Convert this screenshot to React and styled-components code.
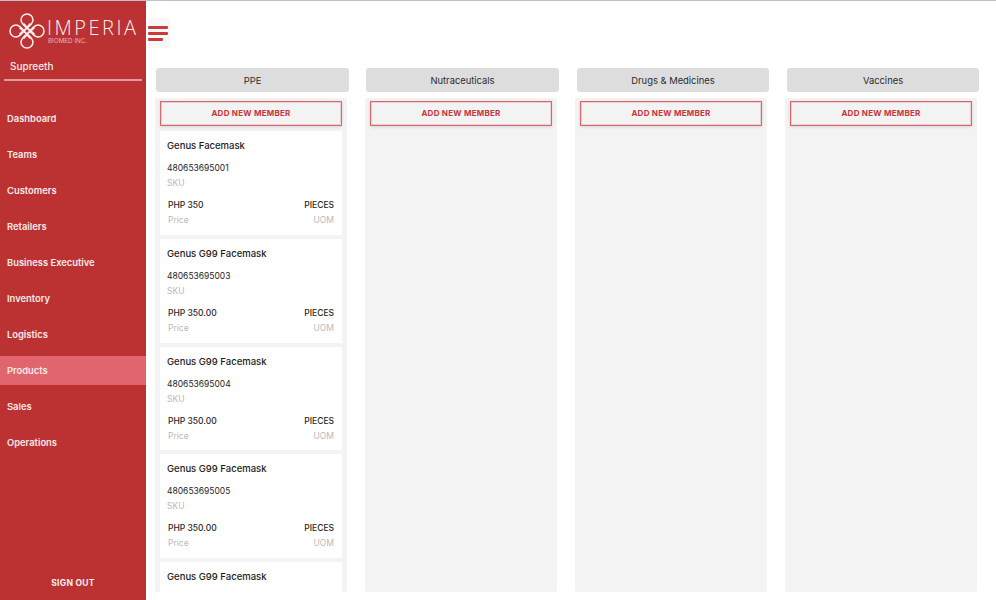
import React from "react";
import styled, { createGlobalStyle } from "styled-components";

const Global = createGlobalStyle`
  html, body { margin: 0; padding: 0; background: #fff; }
  body { font-family: Inter, "Liberation Sans", sans-serif; -webkit-font-smoothing: antialiased; }
`;

const Page = styled.div`
  display: flex;
  height: 600px;
  width: 996px;
  overflow: hidden;
  border-top: 1px solid #bcc2cc;
  box-sizing: border-box;
`;

const Sidebar = styled.aside`
  width: 146px;
  flex: none;
  background: #bc3232;
  box-sizing: border-box;
  display: flex;
  flex-direction: column;
  color: #fff;
`;

const Brand = styled.div`
  display: flex;
  align-items: flex-start;
  padding: 12px 0 0 9px;
  height: 39px;
`;

const BrandText = styled.div`
  margin-left: 2px;
  padding-top: 5px;
  display: flex;
  flex-direction: column;
`;

const BrandName = styled.div`
  font-family: "Open Sans", sans-serif;
  font-weight: 300;
  font-size: 20px;
  line-height: 20px;
  letter-spacing: 2.5px;
  color: #fbeeee;
`;

const BrandSub = styled.div`
  font-size: 6.3px;
  line-height: 7px;
  margin-left: 1px;
  color: #e8b4b4;
`;

const UserName = styled.div`
  margin: 7px 4px 0 4px;
  padding: 0 0 5px 6px;
  font-size: 10px;
  line-height: 15px;
  font-weight: 500;
  color: #fbeaea;
  border-bottom: 2px solid #dc9c9c;
`;

const Nav = styled.nav`
  display: flex;
  flex-direction: column;
  gap: 7px;
  margin-top: 23px;
`;

const NavItem = styled.div`
  height: 29px;
  display: flex;
  align-items: center;
  padding-left: 7px;
  font-size: 9.4px;
  font-weight: 600;
  color: #fbeaea;
  background: ${(p) => (p.$active ? "#e0656c" : "transparent")};
`;

const SignOut = styled.div`
  margin-top: auto;
  padding-bottom: 11px;
  text-align: center;
  font-size: 8.5px;
  font-weight: 700;
  letter-spacing: 0.3px;
  line-height: 12px;
  color: #fdf0f0;
`;

const Main = styled.main`
  flex: 1;
  min-width: 0;
  display: flex;
  flex-direction: column;
`;

const TopBar = styled.div`
  height: 67px;
  flex: none;
  padding: 17px 0 0 2px;
  box-sizing: border-box;
`;

const MenuButton = styled.div`
  width: 22px;
  height: 30px;
  padding-top: 1px;
  box-sizing: border-box;
  background: #f7f7f7;
  display: flex;
  flex-direction: column;
  justify-content: center;
  gap: 3px;
`;

const MenuBar = styled.div`
  height: 3px;
  width: ${(p) => p.$w}px;
  background: #c93a3a;
  border-radius: 1px;
`;

const Board = styled.div`
  flex: 1;
  min-height: 0;
  display: grid;
  grid-template-columns: repeat(4, 192px);
  column-gap: 18px;
  padding: 0 0 8px 9px;
`;

const Column = styled.section`
  display: flex;
  flex-direction: column;
  min-height: 0;
`;

const ColumnTitle = styled.div`
  height: 24px;
  width: ${(p) => 194 - p.$shift}px;
  margin-left: ${(p) => p.$shift}px;
  flex: none;
  background: #dddddd;
  border-radius: 3px;
  display: flex;
  align-items: center;
  justify-content: center;
  font-size: 9.4px;
  color: #2b2b2b;
`;

const ColumnBody = styled.div`
  margin-top: 6px;
  flex: 1;
  min-height: 0;
  overflow: hidden;
  background: #f3f3f3;
  border-radius: 2px;
  padding: 3px 5px 0 5px;
  display: flex;
  flex-direction: column;
  gap: 4px;
`;

const AddButton = styled.div`
  height: 25px;
  flex: none;
  margin-bottom: 1px;
  padding-bottom: 1px;
  box-sizing: border-box;
  border: 1px solid #d9666c;
  background: #f3f3f3;
  box-shadow: inset 0 0 0 1px rgba(222, 130, 135, 0.3), 0 1px 3px rgba(0, 0, 0, 0.12);
  display: flex;
  align-items: center;
  justify-content: center;
  font-size: 8px;
  font-weight: 700;
  letter-spacing: 0.25px;
  color: #c8343c;
`;

const Card = styled.article`
  flex: none;
  height: 103.75px;
  background: #fff;
  box-sizing: border-box;
  padding: 8px 8px 0 7px;
`;

const CardTitle = styled.div`
  font-size: 9.5px;
  font-weight: 500;
  line-height: 13px;
  color: #1c1c1c;
`;

const Sku = styled.div`
  margin-top: 10px;
  font-size: 8.5px;
  line-height: 12px;
  color: #262626;
`;

const Muted = styled.div`
  font-size: 8.5px;
  line-height: 12px;
  color: #b9b9b9;
  margin-top: 3px;
  text-align: ${(p) => p.$align || "left"};
`;

const InfoRow = styled.div`
  margin-top: 10px;
  padding-left: 1px;
  display: flex;
  justify-content: space-between;
`;

const InfoValue = styled.div`
  font-size: 8.5px;
  font-weight: ${(p) => p.$weight || 400};
  line-height: 12px;
  color: #262626;
  text-align: ${(p) => p.$align || "left"};
`;

const loop =
  "M10.5 21.5 C14 17 24 13 24 7 A6 6 0 1 0 12 7 C12 13 22 17 25.5 21.5";

const Logo = () => (
  <svg width="36" height="36" viewBox="0 0 36 36" fill="none" stroke="#fbeeee" strokeWidth="1.5">
    {[0, 90, 180, 270].map((r) => (
      <path key={r} d={loop} transform={`rotate(${r} 18 18)`} />
    ))}
  </svg>
);

const navItems = ["Dashboard", "Teams", "Customers", "Retailers", "Business Executive", "Inventory", "Logistics", "Products", "Sales", "Operations"];
const cards = [
  ["Genus Facemask", "480653695001", "PHP 350"],
  ["Genus G99 Facemask", "480653695003", "PHP 350.00"],
  ["Genus G99 Facemask", "480653695004", "PHP 350.00"],
  ["Genus G99 Facemask", "480653695005", "PHP 350.00"],
  ["Genus G99 Facemask", "480653695006", "PHP 350.00"],
];
const columns = ["PPE", "Nutraceuticals", "Drugs & Medicines", "Vaccines"];

export default function App() {
  return (
    <Page>
      <Global />
      <Sidebar>
        <Brand>
          <Logo />
          <BrandText>
            <BrandName>IMPERIA</BrandName>
            <BrandSub>BIOMED INC.</BrandSub>
          </BrandText>
        </Brand>
        <UserName>Supreeth</UserName>
        <Nav>
          {navItems.map((n) => (
            <NavItem key={n} $active={n === "Products"}>{n}</NavItem>
          ))}
        </Nav>
        <SignOut>SIGN OUT</SignOut>
      </Sidebar>
      <Main>
        <TopBar>
          <MenuButton>
            <MenuBar $w={20} />
            <MenuBar $w={20} />
            <MenuBar $w={15} />
          </MenuButton>
        </TopBar>
        <Board>
          {columns.map((c, i) => (
            <Column key={c}>
              <ColumnTitle $shift={i < 2 ? 1 : 2}>{c}</ColumnTitle>
              <ColumnBody>
                <AddButton>ADD NEW MEMBER</AddButton>
                {i === 0 &&
                  cards.map(([title, sku, price]) => (
                    <Card key={sku}>
                      <CardTitle>{title}</CardTitle>
                      <Sku>{sku}</Sku>
                      <Muted>SKU</Muted>
                      <InfoRow>
                        <div>
                          <InfoValue $weight={500}>{price}</InfoValue>
                          <Muted>Price</Muted>
                        </div>
                        <div>
                          <InfoValue $align="right" $weight={500}>PIECES</InfoValue>
                          <Muted $align="right">UOM</Muted>
                        </div>
                      </InfoRow>
                    </Card>
                  ))}
              </ColumnBody>
            </Column>
          ))}
        </Board>
      </Main>
    </Page>
  );
}
